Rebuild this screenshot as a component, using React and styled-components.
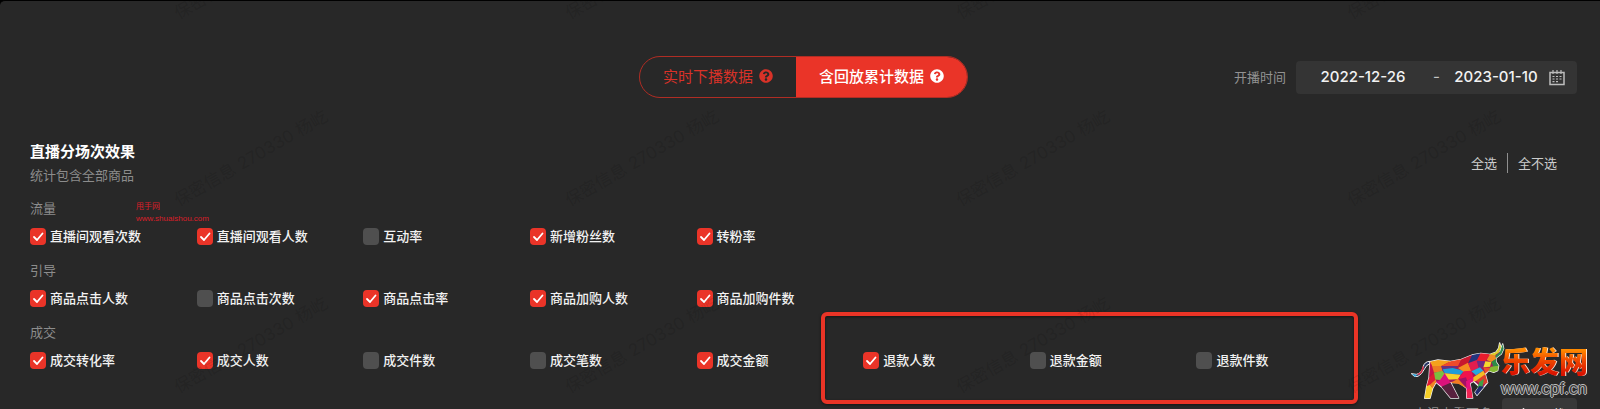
import React, { useState } from "react";
import styled, { createGlobalStyle } from "styled-components";
import { FaQuestionCircle } from "react-icons/fa";

const GlobalStyle = createGlobalStyle`
  * {
    box-sizing: border-box;
  }
  body {
    margin: 0;
    background: #000000;
    font-family: "Noto Sans CJK SC", sans-serif;
    font-size: 13px;
    line-height: 20px;
    color: #f2f2f2;
  }
  button, input {
    font: inherit;
    color: inherit;
    margin: 0;
  }
`;

const Panel = styled.main`
  position: relative;
  height: 100vh;
  overflow: hidden;
  border-top: 1px solid #000000;
  border-radius: 5px 0 0 0;
  background: #282828;
  padding: 55px 23px 0 30px;
`;

const TopBar = styled.div`
  display: grid;
  grid-template-columns: 1fr auto 1fr;
  align-items: center;
`;

const Toggle = styled.div`
  display: flex;
  grid-column: 2;
  height: 42px;
  border: 1px solid #b02d24;
  border-radius: 21px;
  overflow: hidden;
`;

const ToggleButton = styled.button`
  display: flex;
  align-items: center;
  gap: 6px;
  border: 0;
  padding: 0 23px 2px;
  font-size: 15px;
  font-weight: ${({ $active }) => ($active ? 500 : 400)};
  background: ${({ $active }) => ($active ? "#ea3428" : "transparent")};
  color: ${({ $active }) => ($active ? "#ffffff" : "#d93228")};
  cursor: pointer;
`;

const DateFilter = styled.div`
  display: flex;
  align-items: center;
  justify-content: flex-end;
  gap: 10px;
  color: #929292;
`;

const DateBox = styled.div`
  display: flex;
  align-items: center;
  height: 33px;
  padding-right: 12px;
  border-radius: 4px;
  background: #343434;
  color: #c4c4c4;
`;

const DateInput = styled.input`
  width: ${({ $width }) => $width}px;
  border: 0;
  padding: 0;
  background: transparent;
  text-align: center;
  font-family: Inter, sans-serif;
  font-size: 15px;
  font-weight: 500;
  color: #f2f2f2;
`;

const Separator = styled.span`
  width: 13px;
  text-align: center;
  font-family: Inter, sans-serif;
  font-size: 15px;
`;

const Heading = styled.div`
  display: flex;
  align-items: center;
  justify-content: space-between;
  margin: 41px 20px 11px 0;
`;

const Title = styled.h2`
  margin: 0;
  font-size: 15px;
  line-height: 24px;
  font-weight: 700;
  color: #ffffff;
`;

const Subtitle = styled.p`
  margin: 0;
  line-height: 24px;
  color: #8c8c8c;
`;

const SelectActions = styled.div`
  display: flex;
  align-items: center;
`;

const LinkButton = styled.button`
  border: 0;
  padding: 0 0 0 10px;
  background: transparent;
  color: #cccccc;
  cursor: pointer;

  & + & {
    margin-left: 10px;
    border-left: 1px solid #8f8f8f;
  }
`;

const Group = styled.fieldset`
  margin: 0 0 14px;
  border: 0;
  padding: 0;
  min-width: 0;
`;

const GroupName = styled.legend`
  padding: 0;
  margin-bottom: 8px;
  color: #8c8c8c;
`;

const Options = styled.div`
  position: relative;
  display: grid;
  grid-template-columns: repeat(8, 1fr);
  margin-right: 214px;
`;

const Option = styled.label`
  display: flex;
  align-items: center;
  gap: 4px;
  white-space: nowrap;
  font-weight: 500;
`;

const checkMark =
  "data:image/svg+xml,%3Csvg xmlns='http://www.w3.org/2000/svg' viewBox='0 0 16 17'%3E%3Cpath d='M4 9l3 3 5.500-6.500' fill='none' stroke='white' stroke-width='1.800' stroke-linecap='round' stroke-linejoin='round'/%3E%3C/svg%3E";

const Checkbox = styled.input`
  appearance: none;
  width: 16px;
  height: 17px;
  border-radius: 4px;
  background: #4f4f4f;

  &:checked {
    background: #ea3428 url("${checkMark}") center / 100% 100%;
  }
`;

// frame drawn around the last three options of a row
const Highlight = styled.div`
  position: absolute;
  grid-column: 6 / 9;
  inset: -38px 5px -34px -42px;
  border: 4px solid #ea3426;
  border-radius: 6px;
  box-shadow: 0 1px 3px rgba(0, 0, 0, 0.5), inset 0 1px 3px rgba(0, 0, 0, 0.5);
  pointer-events: none;
`;

const Footer = styled.div`
  display: flex;
  align-items: flex-start;
  justify-content: flex-end;
  gap: 10px;
  margin-top: 28px;
  color: #8c8c8c;
`;

const FooterHint = styled.span`
  padding-top: 5px;
`;

const DownloadButton = styled.button`
  display: flex;
  align-items: center;
  gap: 8px;
  height: 32px;
  border: 0;
  border-radius: 4px;
  padding: 0 12px 0 14px;
  background: #383838;
  color: #e0e0e0;
`;

const Watermarks = styled.div`
  position: absolute;
  inset: -124px 0 0 55px;
  display: grid;
  grid-template-columns: repeat(4, 391px);
  grid-auto-rows: 187px;
  place-items: center;
  overflow: hidden;
  pointer-events: none;
`;

const Watermark = styled.span`
  transform: rotate(-30deg);
  white-space: nowrap;
  font-family: Inter, "Noto Sans CJK SC", sans-serif;
  font-size: 17px;
  color: rgba(0, 0, 0, 0.11);
`;

const SiteMark = styled.div`
  position: absolute;
  left: 136px;
  top: 200px;
  font-family: "Liberation Sans", "Noto Sans CJK SC", sans-serif;
  font-size: 8px;
  line-height: 12px;
  color: #d81e28;
  pointer-events: none;
`;

const Logo = styled.div`
  position: absolute;
  right: 12px;
  bottom: 9px;
  display: flex;
  pointer-events: none;
`;

const LogoText = styled.div`
  display: flex;
  flex-direction: column;
  margin-left: -5px;
`;

const LogoName = styled.strong`
  font-size: 29px;
  line-height: 40px;
  font-weight: 900;
  background: linear-gradient(#ff8a00 25%, #f04a00 50%, #d81200 85%);
  background-clip: text;
  color: transparent;
  filter: drop-shadow(1px 0 0 #ffe9dc);
`;

const LogoUrl = styled.span`
  font-family: "Liberation Sans", sans-serif;
  font-size: 17px;
  line-height: 18px;
  color: #3a3a3a;
  text-shadow: 1px 0 #bdbdbd, -1px 0 #bdbdbd, 0 1px #bdbdbd, 0 -1px #bdbdbd;
`;

const groups = [
  {
    name: "流量",
    options: [
      ["直播间观看次数", true],
      ["直播间观看人数", true],
      ["互动率", false],
      ["新增粉丝数", true],
      ["转粉率", true],
    ],
  },
  {
    name: "引导",
    options: [
      ["商品点击人数", true],
      ["商品点击次数", false],
      ["商品点击率", true],
      ["商品加购人数", true],
      ["商品加购件数", true],
    ],
  },
  {
    name: "成交",
    highlight: true,
    options: [
      ["成交转化率", true],
      ["成交人数", true],
      ["成交件数", false],
      ["成交笔数", false],
      ["成交金额", true],
      ["退款人数", true],
      ["退款金额", false],
      ["退款件数", false],
    ],
  },
];

const defaults = Object.fromEntries(groups.flatMap((group) => group.options));

const CalendarIcon = () => (
  <svg width="16" height="17" viewBox="0 0 16 17" fill="none" stroke="#bdbdbd">
    <path d="M1 3.500h14v12H1z" strokeWidth="1.500" />
    <path d="M4 1v4M8 1v4M12 1v4" strokeWidth="1.200" />
    <path
      d="M3.500 7.500h2M7 7.500h2M10.500 7.500h2M3.500 10h2M7 10h2M10.500 10h2M3.500 12.700h2M7 12.700h2"
      strokeWidth="1.200"
    />
  </svg>
);

const DownloadIcon = () => (
  <svg width="15" height="15" viewBox="0 0 15 15" fill="none" stroke="currentColor" strokeWidth="1.500">
    <path d="M7.500 1v9M3.500 6.500l4 4 4-4M1.500 13.500h12" />
  </svg>
);

const bullOutline =
  "M66 65L90 60 128 64 160 58 192 45 218 40 246 43 264 36 272 24 275 9 279 22 276 35 284 12 287 26 280 42 264 54 264 65 272 77 269 92 257 97 242 92 232 103 239 128 222 148 207 166 201 157 214 140 196 124 186 130 194 174 176 174 176 145 152 127 128 128 152 174 128 174 100 140 84 127 74 145 66 175 50 175 56 139 63 113Z";

const bullFacets = [
  ["66 65 90 60 128 64 100 78 72 78", "#f5a11c"],
  ["66 65 72 78 78 98 63 113", "#c9134b"],
  ["72 78 100 78 104 94 78 98", "#ee7b22"],
  ["128 64 160 58 150 78 100 78", "#ef4a2a"],
  ["100 78 150 78 134 92 104 94", "#69317f"],
  ["104 88 134 84 168 92 158 104 110 100", "#1f9cd8"],
  ["78 98 104 92 112 106 96 120 74 118", "#7bbf3f"],
  ["63 113 78 98 82 120 66 140 56 139", "#de1c34"],
  ["56 139 66 134 74 145 66 175 50 175", "#f6cf27"],
  ["66 134 84 118 84 127 74 145", "#f08424"],
  ["110 100 158 104 150 118 96 120", "#f6d22c"],
  ["96 120 110 100 128 128 104 142 84 127", "#d9127b"],
  ["100 140 128 128 152 174 128 174", "#58213e"],
  ["160 58 192 45 180 70 150 84", "#c8172e"],
  ["192 45 218 40 206 62 180 72", "#25357e"],
  ["150 84 180 68 190 92 168 96", "#f58b20"],
  ["180 70 206 60 216 82 190 94", "#e21d4e"],
  ["218 40 246 43 232 64 206 62", "#ea1c2d"],
  ["206 62 232 64 226 82 212 84", "#6f2a83"],
  ["168 94 190 92 196 112 174 124 150 118", "#f0134d"],
  ["190 94 216 82 226 92 204 106", "#27a9dc"],
  ["150 118 174 112 180 130 176 145 152 127", "#a21266"],
  ["128 128 150 116 176 145 152 132", "#f37c22"],
  ["174 124 196 112 196 124 186 130 190 150 176 155", "#e6107e"],
  ["176 150 190 145 194 174 176 174", "#ee2453"],
  ["196 112 226 92 232 103 214 122 196 124", "#f5bb24"],
  ["204 122 232 103 239 128 222 134", "#dd3f2c"],
  ["214 126 228 116 222 148 208 144", "#43a047"],
  ["201 157 214 138 228 140 207 166", "#202b6c"],
  ["246 43 262 40 264 58 250 66 236 60", "#f28b22"],
  ["232 64 250 66 246 80 226 82", "#f4d82d"],
  ["250 66 264 56 264 65 272 77 258 84", "#2e8a46"],
  ["226 82 258 84 242 92 232 100", "#ec4d28"],
  ["248 80 272 77 269 92 257 97 242 92", "#84b832"],
  ["246 43 264 36 272 24 275 9 279 22 272 38 260 46", "#d9cf2d"],
  ["262 48 276 36 284 12 287 26 280 42 264 54", "#308c50"],
];

const Bull = () => (
  <svg width="98" height="60" viewBox="0 0 294 180" aria-hidden="true">
    <path d="M66 64Q49 64 45 82T25 103L10 101Q19 114 30 109T50 86Q54 75 66 71Z" fill="#293665" stroke="#f3f3f3" strokeWidth="3" />
    <path d="M12 102L26 104 22 111Z" fill="#28a8dc" />
    <path d="M46 79Q42 101 29 103" fill="none" stroke="#e32841" strokeWidth="4" />
    <path d={bullOutline} fill="#a51b55" stroke="#f3f3f3" strokeWidth="4" strokeLinejoin="round" />
    {bullFacets.map(([points, color]) => (
      <polygon key={points} points={points} fill={color} />
    ))}
  </svg>
);

const App = () => {
  const [checked, setChecked] = useState(defaults);
  const [mode, setMode] = useState("replay");
  const [start, setStart] = useState("2022-12-26");
  const [end, setEnd] = useState("2023-01-10");

  const setAll = (value) =>
    setChecked(Object.fromEntries(Object.keys(checked).map((key) => [key, value])));

  return (
    <>
      <GlobalStyle />
      <Panel>
        <TopBar>
          <Toggle>
            <ToggleButton $active={mode === "live"} onClick={() => setMode("live")}>
              实时下播数据
              <FaQuestionCircle size={14} />
            </ToggleButton>
            <ToggleButton $active={mode === "replay"} onClick={() => setMode("replay")}>
              含回放累计数据
              <FaQuestionCircle size={14} />
            </ToggleButton>
          </Toggle>
          <DateFilter>
            <label htmlFor="start">开播时间</label>
            <DateBox>
              <DateInput id="start" $width={134} value={start} onChange={(e) => setStart(e.target.value)} />
              <Separator>-</Separator>
              <DateInput aria-label="结束时间" $width={106} value={end} onChange={(e) => setEnd(e.target.value)} />
              <CalendarIcon />
            </DateBox>
          </DateFilter>
        </TopBar>

        <Heading>
          <div>
            <Title>直播分场次效果</Title>
            <Subtitle>统计包含全部商品</Subtitle>
          </div>
          <SelectActions>
            <LinkButton onClick={() => setAll(true)}>全选</LinkButton>
            <LinkButton onClick={() => setAll(false)}>全不选</LinkButton>
          </SelectActions>
        </Heading>

        {groups.map((group) => (
          <Group key={group.name}>
            <GroupName>{group.name}</GroupName>
            <Options>
              {group.options.map(([name]) => (
                <Option key={name}>
                  <Checkbox
                    type="checkbox"
                    checked={checked[name]}
                    onChange={() => setChecked({ ...checked, [name]: !checked[name] })}
                  />
                  {name}
                </Option>
              ))}
              {group.highlight && <Highlight />}
            </Options>
          </Group>
        ))}

        <Footer>
          <FooterHint>上滑查看更多</FooterHint>
          <DownloadButton>
            <DownloadIcon />
            下载
          </DownloadButton>
        </Footer>

        <Watermarks aria-hidden="true">
          {Array.from({ length: 12 }, (_, i) => (
            <Watermark key={i}>保密信息 270330 杨屹</Watermark>
          ))}
        </Watermarks>
        <SiteMark>
          甩手网
          <br />
          www.shuaishou.com
        </SiteMark>
        <Logo>
          <Bull />
          <LogoText>
            <LogoName>乐发网</LogoName>
            <LogoUrl>www.cpf.cn</LogoUrl>
          </LogoText>
        </Logo>
      </Panel>
    </>
  );
};

export default App;
